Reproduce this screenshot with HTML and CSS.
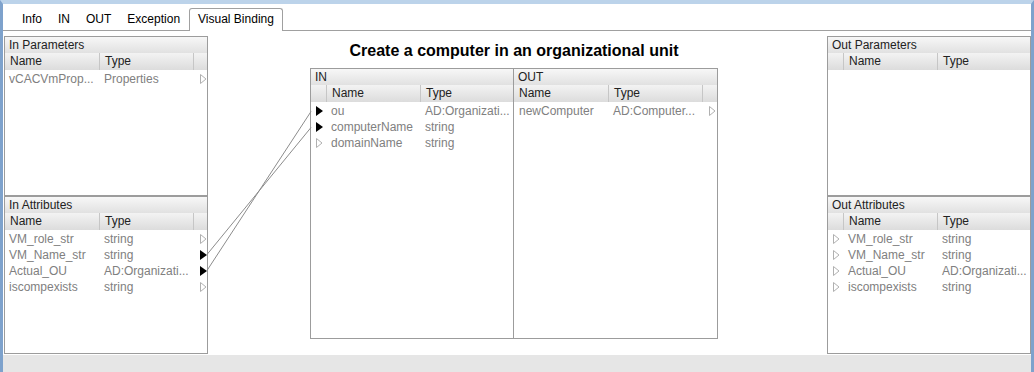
FILE: index.html
```html
<!DOCTYPE html>
<html lang="en">
<head>
  <meta charset="UTF-8">
  <title>Visual Binding</title>
  <link rel="stylesheet" href="styles.css">
</head>
<body>
  <div class="window">
    <!-- tab strip -->
    <div class="tabs">
      <span class="tab">Info</span>
      <span class="tab">IN</span>
      <span class="tab">OUT</span>
      <span class="tab">Exception</span>
      <span class="tab active">Visual Binding</span>
    </div>

    <div class="content">
      <!-- left: in parameters / attributes -->
      <div class="side">
        <div class="panel upper">
          <div class="panel-head">In Parameters</div>
          <div class="cols"><span class="name">Name</span><span class="type">Type</span><span class="tail"></span></div>
          <div class="rows">
            <div class="row"><span class="name">vCACVmProp...</span><span class="type">Properties</span><span class="tail"><svg class="arrow" width="7" height="10"><polygon points="0.5,0.5 6,5 0.5,9.5" class="open"/></svg></span></div>
          </div>
        </div>
        <div class="panel lower">
          <div class="panel-head">In Attributes</div>
          <div class="cols"><span class="name">Name</span><span class="type">Type</span><span class="tail"></span></div>
          <div class="rows">
            <div class="row"><span class="name">VM_role_str</span><span class="type">string</span><span class="tail"><svg class="arrow" width="7" height="10"><polygon points="0.5,0.5 6,5 0.5,9.5" class="open"/></svg></span></div>
            <div class="row"><span class="name">VM_Name_str</span><span class="type">string</span><span class="tail"><svg class="arrow" width="7" height="10"><polygon points="0,0 7,5 0,10" class="solid"/></svg></span></div>
            <div class="row"><span class="name">Actual_OU</span><span class="type">AD:Organizati...</span><span class="tail"><svg class="arrow" width="7" height="10"><polygon points="0,0 7,5 0,10" class="solid"/></svg></span></div>
            <div class="row"><span class="name">iscompexists</span><span class="type">string</span><span class="tail"><svg class="arrow" width="7" height="10"><polygon points="0.5,0.5 6,5 0.5,9.5" class="open"/></svg></span></div>
          </div>
        </div>
      </div>

      <!-- middle: the workflow item -->
      <div class="center">
        <div class="title">Create a computer in an organizational unit</div>
        <div class="binding">
          <div class="half half-in">
            <div class="panel-head">IN</div>
            <div class="cols"><span class="lead"></span><span class="name">Name</span><span class="type">Type</span></div>
            <div class="rows">
              <div class="row"><span class="lead"><svg class="arrow" width="7" height="10"><polygon points="0,0 7,5 0,10" class="solid"/></svg></span><span class="name">ou</span><span class="type">AD:Organizati...</span></div>
              <div class="row"><span class="lead"><svg class="arrow" width="7" height="10"><polygon points="0,0 7,5 0,10" class="solid"/></svg></span><span class="name">computerName</span><span class="type">string</span></div>
              <div class="row"><span class="lead"><svg class="arrow" width="7" height="10"><polygon points="0.5,0.5 6,5 0.5,9.5" class="open"/></svg></span><span class="name">domainName</span><span class="type">string</span></div>
            </div>
          </div>
          <div class="half half-out">
            <div class="panel-head">OUT</div>
            <div class="cols"><span class="name">Name</span><span class="type">Type</span><span class="tail"></span></div>
            <div class="rows">
              <div class="row"><span class="name">newComputer</span><span class="type">AD:Computer...</span><span class="tail"><svg class="arrow" width="7" height="10"><polygon points="0.5,0.5 6,5 0.5,9.5" class="open"/></svg></span></div>
            </div>
          </div>
        </div>
      </div>

      <!-- right: out parameters / attributes -->
      <div class="side">
        <div class="panel upper">
          <div class="panel-head">Out Parameters</div>
          <div class="cols"><span class="lead"></span><span class="name">Name</span><span class="type">Type</span></div>
          <div class="rows"></div>
        </div>
        <div class="panel lower">
          <div class="panel-head">Out Attributes</div>
          <div class="cols"><span class="lead"></span><span class="name">Name</span><span class="type">Type</span></div>
          <div class="rows">
            <div class="row"><span class="lead"><svg class="arrow" width="7" height="10"><polygon points="0.5,0.5 6,5 0.5,9.5" class="open"/></svg></span><span class="name">VM_role_str</span><span class="type">string</span></div>
            <div class="row"><span class="lead"><svg class="arrow" width="7" height="10"><polygon points="0.5,0.5 6,5 0.5,9.5" class="open"/></svg></span><span class="name">VM_Name_str</span><span class="type">string</span></div>
            <div class="row"><span class="lead"><svg class="arrow" width="7" height="10"><polygon points="0.5,0.5 6,5 0.5,9.5" class="open"/></svg></span><span class="name">Actual_OU</span><span class="type">AD:Organizati...</span></div>
            <div class="row"><span class="lead"><svg class="arrow" width="7" height="10"><polygon points="0.5,0.5 6,5 0.5,9.5" class="open"/></svg></span><span class="name">iscompexists</span><span class="type">string</span></div>
          </div>
        </div>
      </div>
    </div>

    <div class="status"></div>

    <!-- bindings drawn over the panels -->
    <svg class="links" width="1034" height="372">
      <line x1="207" y1="254.5" x2="311" y2="127.5"/>
      <line x1="207" y1="270.5" x2="311" y2="111.5"/>
    </svg>
  </div>
</body>
</html>
```

FILE: styles.css
```css
* { box-sizing: border-box; }
body {
  margin: 0;
  font-family: "Liberation Sans", Arial, sans-serif;
  font-size: 12px;
  color: #222;
}

/* Window frame */
.window {
  position: relative;
  width: 1034px;
  height: 372px;
  background: #fff;
  border-top: 4px solid #bcd3ea;
  border-left: 3px solid #7ea2cc;
  border-right: 3px solid #7ea2cc;
  display: flex;
  flex-direction: column;
}

/* Tabs */
.tabs {
  height: 27px;
  display: flex;
  align-items: flex-end;
  padding-left: 11px;
  border-bottom: 1px solid #a0a0a0;
}
.tab {
  line-height: 21px;
  padding: 1px 8px 1px;
  margin-bottom: -1px;
  color: #000;
}
.tab.active {
  padding: 0 8px 1px;
  margin-left: 1px;
  background: #fff;
  border: 1px solid #a0a0a0;
  border-bottom: 0;
  border-radius: 3px 3px 0 0;
}

/* Main area */
.content {
  display: flex;
  height: 324px;
  padding: 5px 0 0 1px;
}
.side {
  width: 204px;
  display: flex;
  flex-direction: column;
}
.panel { border: 1px solid #9c9c9c; }
.panel.upper { height: 160px; }
.panel.lower { height: 158px; }

.panel-head {
  height: 16px;
  line-height: 17px;
  padding-left: 4px;
  background: linear-gradient(#f7f7f7, #e1e1e1);
}
.cols {
  display: flex;
  height: 17px;
  line-height: 17px;
  background: linear-gradient(#f3f3f3, #dcdcdc);
}
.cols span { border-right: 1px solid #c6c6c6; padding-left: 5px; }
.cols span:last-child { border-right: 0; }
.rows { padding-top: 1px; }
.row {
  display: flex;
  height: 16px;
  line-height: 16px;
  color: #808080;
}
.row span { padding-left: 4px; white-space: nowrap; overflow: hidden; }

/* Column widths */
.name { width: 95px; flex: none; }
.type { width: 94px; flex: none; }
.tail { flex: 1; }
.lead { width: 16px; flex: none; }
.lead ~ .name { width: 94px; }
.lead ~ .type { flex: 1; }
.row .lead, .row .tail { padding-left: 0; }
.row .lead .arrow { margin-left: 5px; }
.row .tail .arrow { margin-left: 6px; }

.arrow { display: block; margin-top: 3px; }
.arrow .open { fill: #fff; stroke: #b0b0b0; stroke-width: 1; }
.arrow .solid { fill: #000; }

/* Middle: workflow item */
.center {
  width: 619px;
  padding-left: 102px;
}
.title {
  width: 408px;
  text-align: center;
  font-weight: bold;
  font-size: 16px;
  line-height: 18px;
  color: #000;
  margin: 6px 0 8px;
}
.binding {
  width: 408px;
  height: 271px;
  border: 1px solid #9c9c9c;
  display: flex;
}
.half-in { width: 203px; border-right: 1px solid #9c9c9c; }
.half-out { flex: 1; }
.half-out .row .name { padding-left: 5px; }

/* Bottom strip */
.status {
  height: 17px;
  background: #e6e6e6;
}

/* Binding lines */
.links {
  position: absolute;
  left: -3px;
  top: -4px;
  pointer-events: none;
}
.links line { stroke: #8c8c8c; stroke-width: 1; }
```
